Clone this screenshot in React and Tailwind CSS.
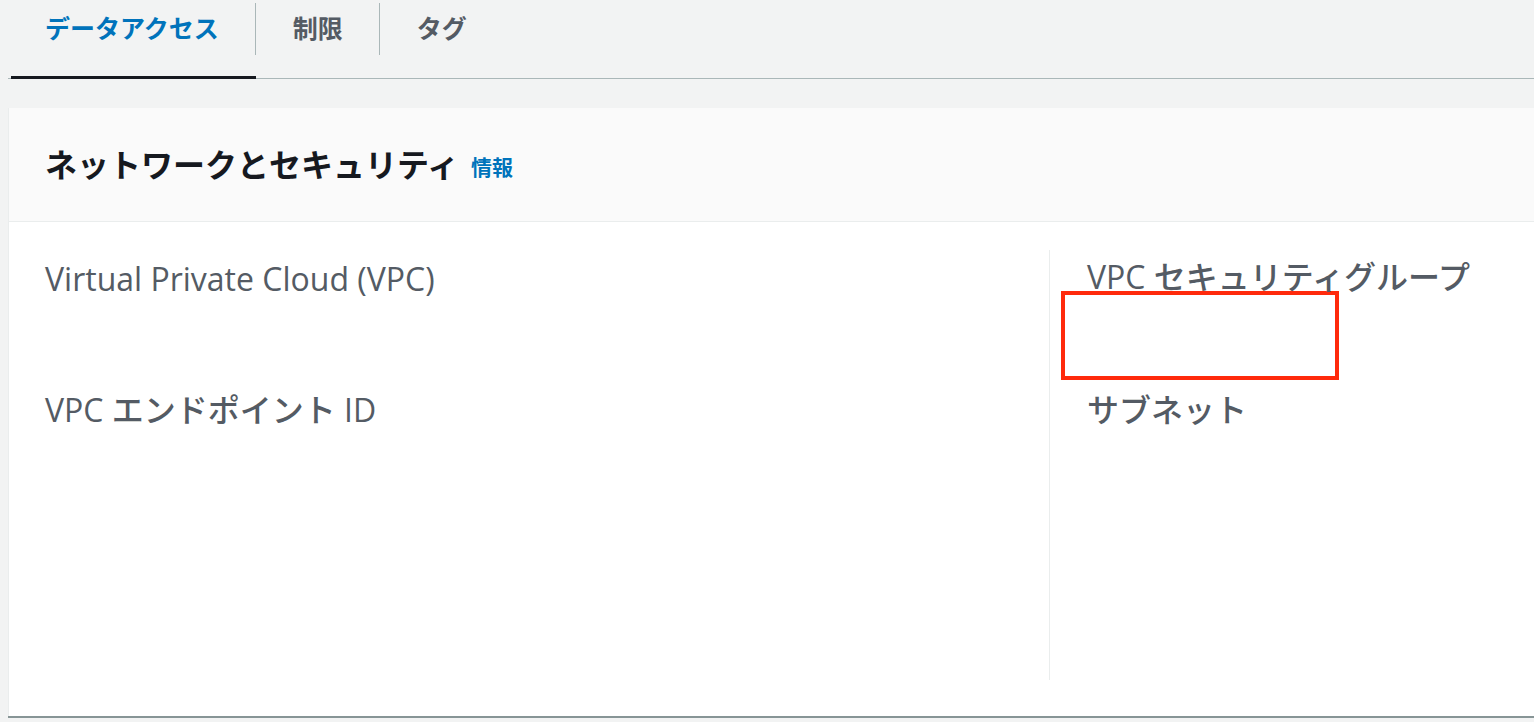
const font = { fontFamily: '"Open Sans", "Noto Sans CJK JP", sans-serif' };

function Tab({ label, active, last, pad }) {
  return (
    <div className="relative flex h-[78px] items-start">
      <div
        className={`mt-[3px] flex h-[52px] items-center ${pad} text-[25px] font-bold ${
          active ? "text-[#0073bb]" : "text-[#545b64]"
        } ${last ? "" : "border-r border-[#aab7b8]"}`}
      >
        {label}
      </div>
      {active && <div className="absolute bottom-[-1px] left-0 right-0 h-[3px] bg-[#16191f]" />}
    </div>
  );
}

export default function App() {
  return (
    <div className="h-[722px] w-[1534px] overflow-hidden bg-[#f2f3f3]" style={font}>
      <div className="ml-[8px] flex border-b border-[#aab7b8] pl-[3px]">
        <Tab label="データアクセス" active pad="pl-[34px] pr-[36px]" />
        <Tab label="制限" pad="pl-[37px] pr-[36px]" />
        <Tab label="タグ" last pad="pl-[37px] pr-[36px]" />
      </div>

      <section className="ml-[8px] mt-[29px] border-l border-[#eaeded] bg-white shadow-[0_2px_0_#879596]">
        <div className="flex h-[114px] items-center border-b border-[#eaeded] bg-[#fafafa] px-[36px]">
          <h2 className="text-[32px] font-bold text-[#16191f]">ネットワークとセキュリティ</h2>
          <a className="ml-[12px] mt-[6px] text-[21px] font-bold text-[#0073bb]">情報</a>
        </div>

        <div className="grid h-[494px] grid-cols-[1040px_1fr] pt-[28px]">
          <div className="px-[36px] text-[32px] font-medium text-[#545b64]">
            <div className="mt-[9px] leading-[40px]">Virtual Private Cloud (VPC)</div>
            <div className="mt-[91px] leading-[40px]">VPC エンドポイント ID</div>
          </div>
          <div className="mb-[36px] border-l border-[#eaeded] pl-[37px] text-[32px] font-medium text-[#545b64]">
            <div className="mt-[7px] leading-[40px]">VPC セキュリティグループ</div>
            <div className="-ml-[26px] -mt-[6px] h-[89px] w-[278px] border-4 border-[#ff2a0c]" />
            <div className="mt-[10px] leading-[40px]">サブネット</div>
          </div>
        </div>
      </section>
    </div>
  );
}
